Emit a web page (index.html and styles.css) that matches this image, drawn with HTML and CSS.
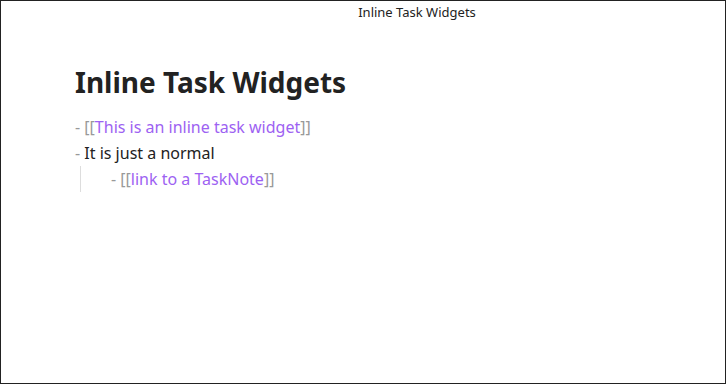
FILE: index.html
```html
<!DOCTYPE html>
<html lang="en">
<head>
    <meta charset="UTF-8">
    <title>Inline Task Widgets</title>
    <link rel="stylesheet" href="styles.css">
</head>
<body>
    <div class="window">
        <div class="view-header">Inline Task Widgets</div>
        <div class="note">
            <h1>Inline Task Widgets</h1>
            <div class="line"><span class="dash">- </span><span class="bracket">[[</span><span class="link">This is an inline task widget</span><span class="bracket">]]</span></div>
            <div class="line"><span class="dash">- </span>It is just a normal</div>
            <div class="line nested"><span class="guide"></span><span class="dash">- </span><span class="bracket">[[</span><span class="link">link to a TaskNote</span><span class="bracket">]]</span></div>
        </div>
    </div>
</body>
</html>
```

FILE: styles.css
```css
html, body {
    margin: 0;
    padding: 0;
    background: #fff;
}

body {
    font-family: "Noto Sans", "Open Sans", sans-serif;
    color: #222;
}

.window {
    box-sizing: border-box;
    width: 726px;
    height: 384px;
    border: 1px solid #222;
}

.view-header {
    font-size: 13px;
    line-height: 22px;
    padding-left: 108px;
    text-align: center;
    color: #222;
}

.note {
    padding: 0 0 0 74px;
}

h1 {
    font-size: 28px;
    font-weight: 700;
    margin: 39px 0 12px;
    line-height: 40px;
    color: #222;
}

.line {
    font-size: 16px;
    line-height: 26px;
    height: 26px;
}

.dash,
.bracket {
    color: #999;
}

.link {
    color: #9d62f2;
}

.nested {
    display: flex;
    padding-left: 36px;
    white-space: pre;
}

.guide {
    width: 1px;
    margin-left: -31px;
    margin-right: 30px;
    background: #ddd;
}
```
